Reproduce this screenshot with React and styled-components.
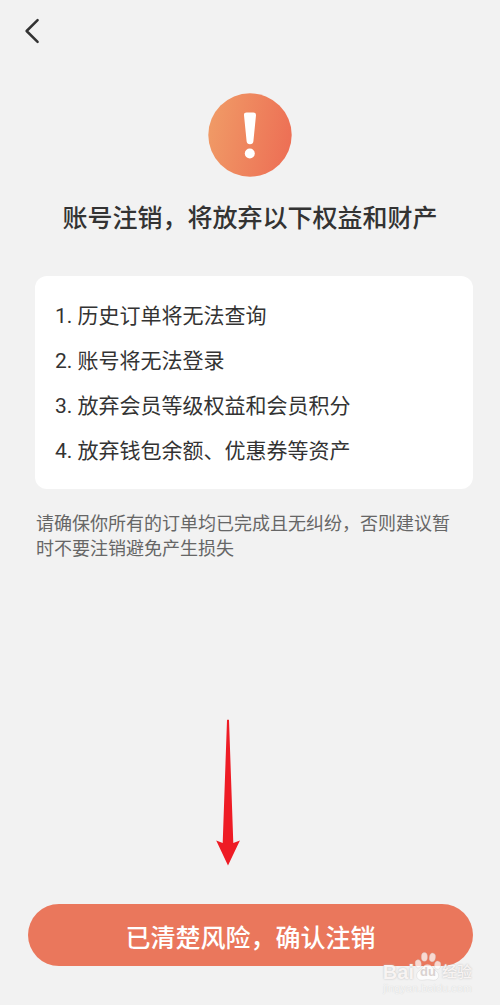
import styled, { createGlobalStyle } from 'styled-components'

const benefits = [
  '历史订单将无法查询',
  '账号将无法登录',
  '放弃会员等级权益和会员积分',
  '放弃钱包余额、优惠券等资产',
]

const BackIcon = () => (
  <svg width="16" height="26" viewBox="0 0 16 26" fill="none" aria-hidden="true">
    <path d="M13.6 2.2L2.6 13L13.6 23.8" stroke="#333" strokeWidth="2.5" strokeLinecap="round" strokeLinejoin="round" />
  </svg>
)

const WarningIcon = () => (
  <svg width="84" height="84" viewBox="0 0 84 84" aria-hidden="true">
    <defs>
      <linearGradient id="warning" x1="0" y1="0.4" x2="1" y2="0.6">
        <stop offset="0" stopColor="#f09a66" />
        <stop offset="1" stopColor="#ed6f55" />
      </linearGradient>
    </defs>
    <circle cx="42" cy="42" r="41.7" fill="url(#warning)" />
    <path d="M38.6 19.5h6.8q2.8 0 2.6 2.8l-2.6 26q-.3 3-3.4 3t-3.4-3l-2.6-26q-.2-2.8 2.6-2.8z" fill="#fff" />
    <circle cx="41.8" cy="60.5" r="5" fill="#fff" />
  </svg>
)

const ArrowIcon = () => (
  <svg width="26" height="148" viewBox="0 0 26 148" aria-hidden="true">
    <path d="M12 1.2q1-1.4 2 0L18.3 124l6.6-2.4L13 146.5L1.2 121.6l6.5 2.4z" fill="#ee1c25" />
  </svg>
)

const PawIcon = () => (
  <svg width="28" height="29" viewBox="0 0 28 29" aria-hidden="true">
    <g fill="#fff" fillOpacity="0.72" stroke="#ccc" strokeOpacity="0.6" strokeWidth="0.6">
      <ellipse cx="4.2" cy="11.8" rx="3" ry="4.1" transform="rotate(-8 4.2 11.8)" />
      <ellipse cx="10.4" cy="4.9" rx="3" ry="4.3" />
      <ellipse cx="18.4" cy="5.4" rx="3" ry="4.3" transform="rotate(10 18.4 5.4)" />
      <ellipse cx="23.6" cy="13.2" rx="3.1" ry="4.1" transform="rotate(8 23.6 13.2)" />
      <path d="M13.5 12.4c-3.6 0-4.5 3.2-6.8 5.1c-2.4 2-4.4 3.6-4.1 6.4c.3 3 2.6 4.5 5.4 4.4c2-.1 3.6-.7 5.7-.7s3.8.7 5.8.7c2.8 0 5-1.6 5.1-4.5c.1-2.8-2-4.3-4.2-6.3c-2.2-2-3.4-5.1-6.9-5.1z" />
    </g>
  </svg>
)

const App = () => {
  return (
    <>
      <GlobalStyle />
      <Page>
        <TopBar>
          <BackButton type="button" aria-label="返回">
            <BackIcon />
          </BackButton>
        </TopBar>
        <Intro>
          <WarningIcon />
          <Title>账号注销，将放弃以下权益和财产</Title>
        </Intro>
        <Content>
          <BenefitList>
            {benefits.map((text, i) => (
              <li key={text}>{`${i + 1}. ${text}`}</li>
            ))}
          </BenefitList>
          <Note>请确保你所有的订单均已完成且无纠纷，否则建议暂时不要注销避免产生损失</Note>
        </Content>
        <Footer>
          <ConfirmButton type="button">已清楚风险，确认注销</ConfirmButton>
          <Pointer>
            <ArrowIcon />
          </Pointer>
          <Watermark>
            <Brand>
              <span>Bai</span>
              <Paw>
                <PawIcon />
                <small>du</small>
              </Paw>
              <BrandName>经验</BrandName>
            </Brand>
            <Domain>jingyan.baidu.com</Domain>
          </Watermark>
        </Footer>
      </Page>
    </>
  )
}

// Styles

const GlobalStyle = createGlobalStyle`
  * {
    box-sizing: border-box;
    margin: 0;
    padding: 0;
  }

  body {
    background-color: #f2f2f2;
    color: #333;
    font-family: Roboto, 'Noto Sans CJK SC', sans-serif;
  }
`

const Page = styled.main`
  min-height: 100vh;
  display: flex;
  flex-direction: column;
`

const TopBar = styled.header`
  height: 62px;
  display: flex;
  align-items: center;
  padding: 0 16px;
`

const BackButton = styled.button`
  display: flex;
  padding: 8px;
  border: none;
  background: none;
  cursor: pointer;
`

const Intro = styled.section`
  display: flex;
  flex-direction: column;
  align-items: center;
  gap: 24px;
  padding-top: 31px;
`

const Title = styled.h1`
  font-size: 25px;
  font-weight: 500;
  line-height: 36px;
`

const Content = styled.section`
  padding: 39px 27px 0 35px;
`

const BenefitList = styled.ol`
  list-style: none;
  padding: 18px 20px 15px;
  border-radius: 12px;
  background-color: #fff;
  font-size: 21px;
  line-height: 45px;
`

const Note = styled.p`
  margin-top: 22px;
  padding: 0 16px 0 1px;
  color: #666;
  font-size: 18px;
  line-height: 25px;
`

const Footer = styled.footer`
  position: relative;
  margin-top: auto;
  padding: 0 27px 39px 28px;
`

const ConfirmButton = styled.button`
  width: 100%;
  height: 62px;
  padding-top: 2px;
  border: none;
  border-radius: 31px;
  background-color: #ea775c;
  color: #fff;
  font-family: inherit;
  font-size: 25px;
  font-weight: 500;
  cursor: pointer;
`

const Pointer = styled.div`
  position: absolute;
  left: 215px;
  bottom: 138px;
  display: flex;
  pointer-events: none;
`

const Watermark = styled.div`
  position: absolute;
  right: 28px;
  bottom: 10px;
  display: flex;
  flex-direction: column;
  align-items: flex-end;
  pointer-events: none;
`

const Brand = styled.div`
  display: flex;
  align-items: flex-end;
  color: #f8f4f3;
  text-shadow: 0 0 2px #bbb;
  font-family: 'Liberation Sans', 'Noto Sans CJK SC', sans-serif;
  font-size: 20px;
  font-weight: 700;
  line-height: 18px;
`

const Paw = styled.span`
  position: relative;
  display: flex;

  small {
    position: absolute;
    left: 0;
    right: 0;
    bottom: 2px;
    text-align: center;
    color: #d9d2d0;
    font-size: 13px;
    line-height: 14px;
    text-shadow: none;
  }
`

const BrandName = styled.span`
  font-size: 15px;
  font-weight: 500;
`

const Domain = styled.div`
  color: #f6f6f6;
  text-shadow: 0 0 1px #ccc;
  font-family: 'Liberation Sans', sans-serif;
  font-size: 11px;
  line-height: 14px;
`

export default App
